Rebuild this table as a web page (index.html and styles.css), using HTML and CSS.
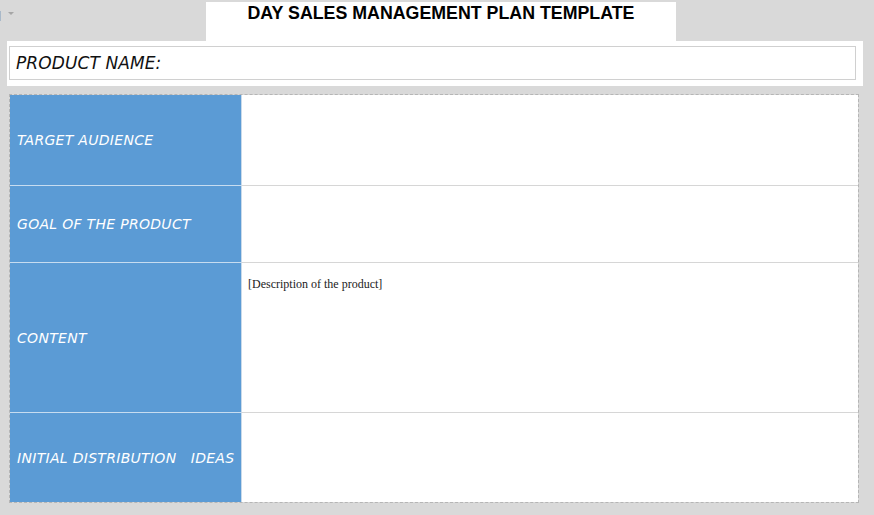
FILE: index.html
```html
<!DOCTYPE html>
<html>
<head>
<meta charset="utf-8">
<link rel="stylesheet" href="styles.css">
</head>
<body>
<div class="sheet">
  <span class="edge"></span>
  <span class="caret"></span>
  <div class="top">
    <div class="title">DAY SALES MANAGEMENT PLAN TEMPLATE</div>
  </div>
  <div class="product">
    <div class="product-inner">PRODUCT NAME:</div>
  </div>
  <div class="plan">
    <div class="label">TARGET AUDIENCE</div>
    <div class="cell"></div>
    <div class="label sep">GOAL OF THE PRODUCT</div>
    <div class="cell sep"></div>
    <div class="label sep">CONTENT</div>
    <div class="cell sep desc">[Description of the product]</div>
    <div class="label sep">INITIAL DISTRIBUTION&nbsp;&nbsp; IDEAS</div>
    <div class="cell sep"></div>
  </div>
</div>
</body>
</html>
```

FILE: styles.css
```css
html, body {
  margin: 0;
  padding: 0;
  background: #d9d9d9;
}
.sheet {
  position: relative;
  width: 874px;
  height: 515px;
  overflow: hidden;
}
.edge {
  position: absolute;
  left: 0;
  top: 11px;
  width: 1px;
  height: 10px;
  background: #a9b9c9;
}
.caret {
  position: absolute;
  left: 8px;
  top: 12px;
  width: 0;
  height: 0;
  border-left: 3px solid transparent;
  border-right: 3px solid transparent;
  border-top: 3px solid #a6a6a6;
}
.top {
  height: 41px;
  display: flex;
}
.title {
  margin: 2px 0 0 206px;
  width: 470px;
  height: 39px;
  background: #fff;
  box-sizing: border-box;
  padding-top: 1px;
  text-align: center;
  font: bold 17.8px "Liberation Sans", Arial, sans-serif;
  color: #000;
}
.product {
  margin-left: 7px;
  width: 856px;
  height: 45px;
  box-sizing: border-box;
  background: #fff;
  padding: 5px 7px 6px 2px;
}
.product-inner {
  height: 34px;
  box-sizing: border-box;
  border: 1px solid #d0d0d0;
  padding: 6px 0 0 6px;
  font: italic 17px "DejaVu Sans", sans-serif;
  font-weight: 300;
  letter-spacing: 0.1px;
  color: #111;
}
.plan {
  margin: 8px 0 0 9px;
  width: 850px;
  height: 409px;
  box-sizing: border-box;
  border: 1px dashed #b5b5b5;
  display: grid;
  grid-template-columns: 232px 1fr;
  grid-template-rows: 90px 77px 150px 1fr;
}
.label {
  background: #5b9bd5;
  color: #fff;
  font: italic 14px "DejaVu Sans", sans-serif;
  font-weight: 300;
  letter-spacing: 0.3px;
  display: flex;
  align-items: center;
  padding-left: 7px;
  border-right: 1px solid #c9daea;
}
.cell {
  background: #fff;
}
.label.sep {
  border-top: 1px solid #c7dcf0;
}
.cell.sep {
  border-top: 1px solid #d6d6d6;
}
.desc {
  padding: 14px 0 0 6px;
  font: 12px "Liberation Serif", "Times New Roman", serif;
  color: #222;
}
```
